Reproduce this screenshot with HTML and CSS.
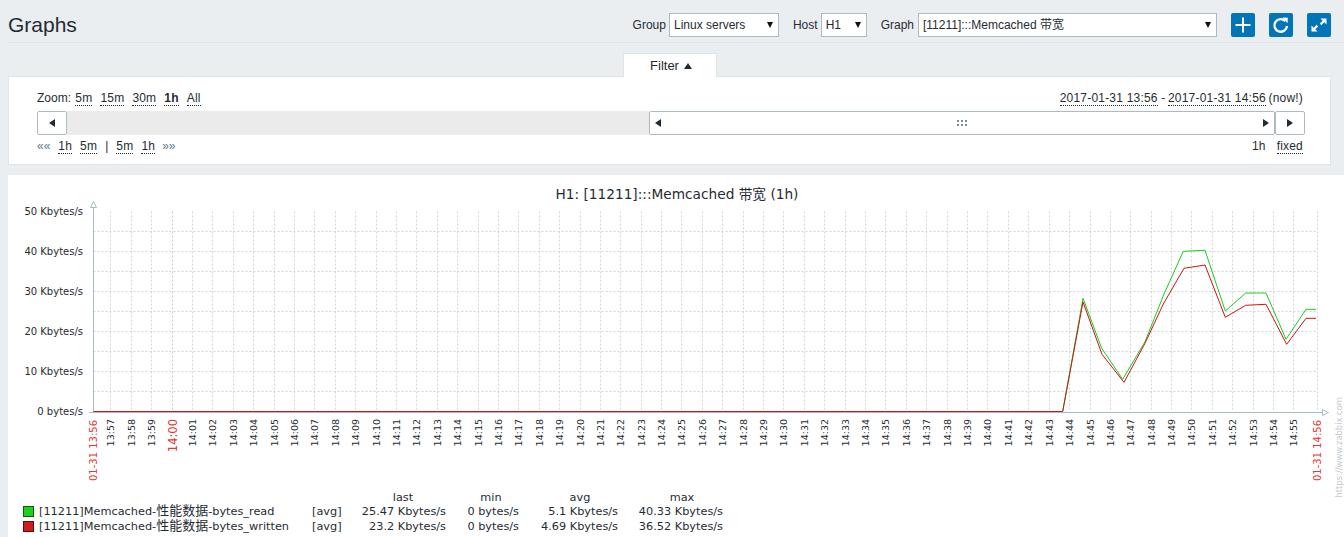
FILE: index.html
```html
<!DOCTYPE html>
<html lang="en">
<head>
  <meta charset="UTF-8" />
  <meta name="viewport" content="width=device-width, initial-scale=1.0" />
  <title>Graphs</title>
  <link rel="stylesheet" href="styles.css">
</head>
<body>
  <header class="header">
    <h1>Graphs</h1>
    <form class="controls">
      <label class="label" for="group">Group</label>
      <div class="select group-select">
        <select id="group"><option>Linux servers</option></select>
      </div>
      <label class="label host-label" for="host">Host</label>
      <div class="select host-select">
        <select id="host"><option>H1</option></select>
      </div>
      <label class="label graph-label" for="graph">Graph</label>
      <div class="select graph-select">
        <select id="graph"><option>[11211]:::Memcached 带宽</option></select>
      </div>
      <button type="button" class="icon-btn" aria-label="Add">
        <svg width="24" height="24" viewBox="0 0 24 24"><path d="M12 4.500v15M4.500 12h15" stroke="#fff" stroke-width="2" fill="none"/></svg>
      </button>
      <button type="button" class="icon-btn" aria-label="Refresh">
        <svg width="24" height="24" viewBox="0 0 24 24"><path d="M16.400 8.200A6.300 6.300 0 1 0 18 13" stroke="#fff" stroke-width="2.400" fill="none"/><path d="M13.600 4.600l5.200.2-.2 5.400z" fill="#fff"/></svg>
      </button>
      <button type="button" class="icon-btn" aria-label="Fullscreen">
        <svg width="24" height="24" viewBox="0 0 24 24"><path d="M13.500 5.500h6v6l-2.200-2.200-2.900 2.900-1.600-1.600 2.900-2.900zM10.500 18.500h-6v-6l2.200 2.200 2.900-2.900 1.600 1.600-2.900 2.900z" fill="#fff"/></svg>
      </button>
    </form>
  </header>

  <div class="tab-row">
    <div class="tab">Filter<span class="tab-arrow"></span></div>
  </div>

  <section class="filter">
    <div class="filter-row">
      <div>
        Zoom: <a class="link first-link" href="#">5m</a><a class="link" href="#">15m</a><a class="link" href="#">30m</a><a class="link bold" href="#">1h</a><a class="link" href="#">All</a>
      </div>
      <div class="period"><a class="plain" href="#">2017-01-31 13:56</a> - <a class="plain to-date" href="#">2017-01-31 14:56</a> <span class="now">(now!)</span></div>
    </div>
    <div class="scrollbar">
      <button type="button" class="scroll-btn" aria-label="Back"><span class="arrow-left"></span></button>
      <div class="track"></div>
      <div class="handle">
        <span class="arrow-left"></span>
        <span class="grip"></span>
        <span class="arrow-right"></span>
      </div>
      <button type="button" class="scroll-btn" aria-label="Forward"><span class="arrow-right"></span></button>
    </div>
    <div class="filter-row">
      <div class="nav">
        <span class="quote">««</span><a class="link" href="#">1h</a><a class="link" href="#">5m</a><span class="sep">|</span><a class="link" href="#">5m</a><a class="link" href="#">1h</a><span class="quote quote-end">»»</span>
      </div>
      <div>1h <a class="link fixed" href="#">fixed</a></div>
    </div>
  </section>

  <section class="graph" id="graphBox"></section>

  <script src="graph.js"></script>
</body>
</html>
```

FILE: styles.css
```css
* {
  box-sizing: border-box;
}
html, body {
  overflow: hidden;
}
body {
  margin: 0;
  height: 537px;
  background: #ebeef0;
  color: #1f2c33;
  font-family: "Liberation Sans", Arial, "Noto Sans CJK SC", sans-serif;
  font-size: 12px;
}
a {
  color: #1f2c33;
  text-decoration: none;
}
.header {
  display: flex;
  justify-content: space-between;
  align-items: center;
  height: 43px;
  margin-left: 8px;
  padding: 13px 13px 5px 0;
  border-bottom: 1px solid #dfe4e7;
}
h1 {
  margin: 0;
  font-size: 21px;
  font-weight: normal;
  line-height: 24px;
}
.controls {
  display: flex;
  align-items: center;
  margin: 0;
}
.label {
  margin-right: 3px;
}
.host-label {
  margin-left: 14px;
}
.graph-label {
  margin-left: 14px;
  margin-right: 4px;
}
.select {
  position: relative;
  height: 24px;
}
.select::after {
  content: "";
  position: absolute;
  right: 6px;
  top: 9px;
  border-left: 3.500px solid transparent;
  border-right: 3.500px solid transparent;
  border-top: 6px solid #111;
  pointer-events: none;
}
.select select {
  appearance: none;
  width: 100%;
  height: 24px;
  padding: 0 4px;
  border: 1px solid #acbbc2;
  border-radius: 0;
  background: #fff;
  color: #1f2c33;
  font: inherit;
}
.group-select {
  width: 110px;
}
.host-select {
  width: 46px;
}
.graph-select {
  width: 299px;
}
.icon-btn {
  width: 24px;
  height: 24px;
  margin-left: 14px;
  padding: 0;
  border: none;
  border-radius: 2px;
  background: #0275b8;
  display: flex;
}
.tab-row {
  display: flex;
  height: 33px;
  padding: 10px 0 0 623px;
}
.tab {
  display: flex;
  align-items: center;
  justify-content: center;
  gap: 5px;
  width: 94px;
  height: 24px;
  padding-left: 2px;
  position: relative;
  z-index: 1;
  background: #fff;
  border: 1px solid #dfe4e7;
  border-bottom: none;
  font-size: 13px;
}
.tab-arrow {
  border-left: 4px solid transparent;
  border-right: 4px solid transparent;
  border-bottom: 6px solid #1f2c33;
}
.filter {
  margin: 0 13px 0 8px;
  height: 89px;
  padding: 12px 27px 0 28px;
  background: #fff;
  border: 1px solid #dfe4e7;
}
.filter-row {
  display: flex;
  justify-content: space-between;
  align-items: center;
  height: 18px;
}
.period {
  letter-spacing: 0.2px;
}
.to-date,
.now {
  margin-left: -1px;
}
.link {
  margin-left: 8px;
  letter-spacing: 0.2px;
  border-bottom: 1px dotted #1f2c33;
}
.first-link {
  margin-left: 1px;
}
.link.bold {
  font-weight: bold;
}
.plain {
  border-bottom: 1px dotted #1f2c33;
}
.quote {
  color: #5a7a8c;
}
.quote-end {
  margin-left: 7px;
}
.sep {
  margin-left: 8px;
}
.scrollbar {
  display: flex;
  height: 24px;
  margin: 4px -2px 2px 0;
}
.track {
  width: 582px;
  background: #ebebeb;
}
.scroll-btn {
  display: flex;
  align-items: center;
  justify-content: center;
  width: 30px;
  height: 24px;
  padding: 0;
  background: #fff;
  border: 1px solid #acbbc2;
  border-radius: 2px;
}
.handle {
  display: flex;
  align-items: center;
  justify-content: space-between;
  width: 626px;
  padding: 0 5px;
  background: #fff;
  border: 1px solid #acbbc2;
  border-radius: 2px;
}
.arrow-left {
  border-top: 4px solid transparent;
  border-bottom: 4px solid transparent;
  border-right: 6px solid #1f2c33;
}
.arrow-right {
  border-top: 4px solid transparent;
  border-bottom: 4px solid transparent;
  border-left: 6px solid #1f2c33;
}
.grip {
  width: 12px;
  height: 8px;
  background-image: radial-gradient(circle, #768d99 0.8px, transparent 0.9px);
  background-size: 4px 4px;
}
.graph {
  margin: 10px 0 0 8px;
  height: 362px;
  background: #fff;
  overflow: hidden;
}
.graph svg {
  display: block;
}
.axis-text {
  font-family: "DejaVu Sans", "Noto Sans CJK SC", sans-serif;
  font-size: 10px;
  fill: #1f2c33;
}
.graph-title {
  font-size: 13.700px;
}
.legend-text {
  font-size: 11.300px;
}
.legend-cjk {
  font-size: 13px;
}
.time-text {
  font-size: 9.500px;
}
.date-text {
  fill: #e33734;
}
.hour-text {
  font-size: 11.500px;
  fill: #e33734;
}
.watermark {
  font-family: "DejaVu Sans", sans-serif;
  font-size: 8.400px;
  fill: #c4c9cc;
}
.grid {
  stroke: #cfd6da;
  stroke-width: 1;
  stroke-dasharray: 2 2;
}
.grid-hour {
  stroke: #bcc8ce;
}
.axis {
  stroke: #acbbc2;
  stroke-width: 1;
}
```

FILE: graph.js
```js
// draws the chart into #graphBox, coordinates are page pixels
const NS = 'http://www.w3.org/2000/svg';
const box = document.getElementById('graphBox');
const svg = document.createElementNS(NS, 'svg');
svg.setAttribute('width', 1336);
svg.setAttribute('height', 362);
svg.setAttribute('viewBox', '8 175 1336 362');
box.appendChild(svg);

function add(tag, attrs, text) {
  const el = document.createElementNS(NS, tag);
  for (const k in attrs) el.setAttribute(k, attrs[k]);
  if (text !== undefined) el.textContent = text;
  svg.appendChild(el);
  return el;
}

function label(x, y, text, cls, anchor) {
  return add('text', { x, y, class: 'axis-text ' + (cls || ''), 'text-anchor': anchor || 'start' }, text);
}

function upLabel(x, y, text, cls) {
  return add('text', {
    class: 'axis-text ' + cls,
    'text-anchor': 'end',
    transform: `translate(${x} ${y}) rotate(-90)`
  }, text);
}

const X0 = 93.5, XEND = 1317.5, Y0 = 411.5, YTOP = 211.5;
const minuteX = m => Math.round(110.3 + (m - 1) * 20.4) + 0.5;

// grid
for (let y = YTOP + 20; y < Y0; y += 20) {
  add('line', { x1: X0, x2: XEND, y1: y, y2: y, class: 'grid' });
}
for (let m = 1; m < 60; m++) {
  const cls = (56 + m) % 60 === 0 ? 'grid grid-hour' : 'grid';
  add('line', { x1: minuteX(m), x2: minuteX(m), y1: YTOP, y2: Y0, class: cls });
}
add('line', { x1: XEND, x2: XEND, y1: YTOP, y2: Y0, class: 'grid' });

// axes
add('line', { x1: X0, x2: X0, y1: 205, y2: 413, class: 'axis' });
add('line', { x1: 89, x2: 1323, y1: 412.5, y2: 412.5, class: 'axis' });
add('path', { d: 'M90.500 207.500L93.500 201.500L96.500 207.500Z', fill: '#fff', stroke: '#acbbc2' });
add('path', { d: 'M1322.500 409.500L1328.500 412.500L1322.500 415.500Z', fill: '#fff', stroke: '#acbbc2' });

// data
const green = [[1062.7,411.5],[1083,298.3],[1101.7,348.3],[1122.7,379.3],[1145,341.7],[1164,294],[1183.3,251.3],[1205,250.3],[1225.3,311],[1245.7,293],[1266,293],[1286,339.3],[1306,309.3],[1316,309.3]];
const red = [[93.5,411.5],[1062.7,411.5],[1083,302],[1102,354.3],[1124,382.3],[1145,343.3],[1163.3,304],[1184,268.3],[1205,265],[1225.3,317.3],[1245.7,305.3],[1266,304.3],[1286.7,344.3],[1306,318.3],[1316,318.3]];
add('polyline', { points: green.join(' '), fill: 'none', stroke: '#1ec91e', 'stroke-width': 1 });
add('polyline', { points: red.join(' '), fill: 'none', stroke: '#cc1515', 'stroke-width': 1 });

// y labels
const yLabels = ['50 Kbytes/s', '40 Kbytes/s', '30 Kbytes/s', '20 Kbytes/s', '10 Kbytes/s', '0 bytes/s'];
yLabels.forEach((t, i) => label(83, 215 + i * 40, t, '', 'end'));

// x labels
upLabel(97, 420, '01-31 13:56', 'date-text');
upLabel(1321, 420, '01-31 14:56', 'date-text');
for (let m = 1; m < 60; m++) {
  const hour = 13 + Math.floor((56 + m) / 60);
  const min = String((56 + m) % 60).padStart(2, '0');
  if (m === 4) upLabel(minuteX(m) + 4.5, 419, `${hour}:${min}`, 'hour-text');
  else upLabel(minuteX(m) + 3.5, 419, `${hour}:${min}`, 'time-text');
}

// title and watermark
label(677, 199, 'H1: [11211]:::Memcached 带宽 (1h)', 'graph-title', 'middle');
add('text', { class: 'watermark', 'text-anchor': 'end', transform: 'translate(1342 397) rotate(-90)' }, 'https://www.zabbix.com');

// legend
[['last', 403], ['min', 491], ['avg', 580], ['max', 682]].forEach(h => label(h[1], 501, h[0], 'legend-text', 'middle'));
const legend = [
  { color: '#1ed01e', edge: '#0b5c0b', suffix: 'bytes_read', vals: ['25.47 Kbytes/s', '0 bytes/s', '5.1 Kbytes/s', '40.33 Kbytes/s'] },
  { color: '#cc1c1c', edge: '#5c0b0b', suffix: 'bytes_written', vals: ['23.2 Kbytes/s', '0 bytes/s', '4.69 Kbytes/s', '36.52 Kbytes/s'] }
];
const ends = [446, 519, 618, 723];
legend.forEach((row, i) => {
  const y = 515 + i * 15;
  add('rect', { x: 23.5, y: y - 8.5, width: 10, height: 10, fill: row.color, stroke: row.edge });
  const name = label(39, y, '[11211]Memcached-', 'legend-text');
  const cjk = document.createElementNS(NS, 'tspan');
  cjk.setAttribute('class', 'legend-cjk');
  cjk.textContent = '性能数据';
  name.appendChild(cjk);
  name.appendChild(document.createTextNode('-' + row.suffix));
  label(312, y, '[avg]', 'legend-text');
  row.vals.forEach((v, j) => label(ends[j], y, v, 'legend-text', 'end'));
});
```
